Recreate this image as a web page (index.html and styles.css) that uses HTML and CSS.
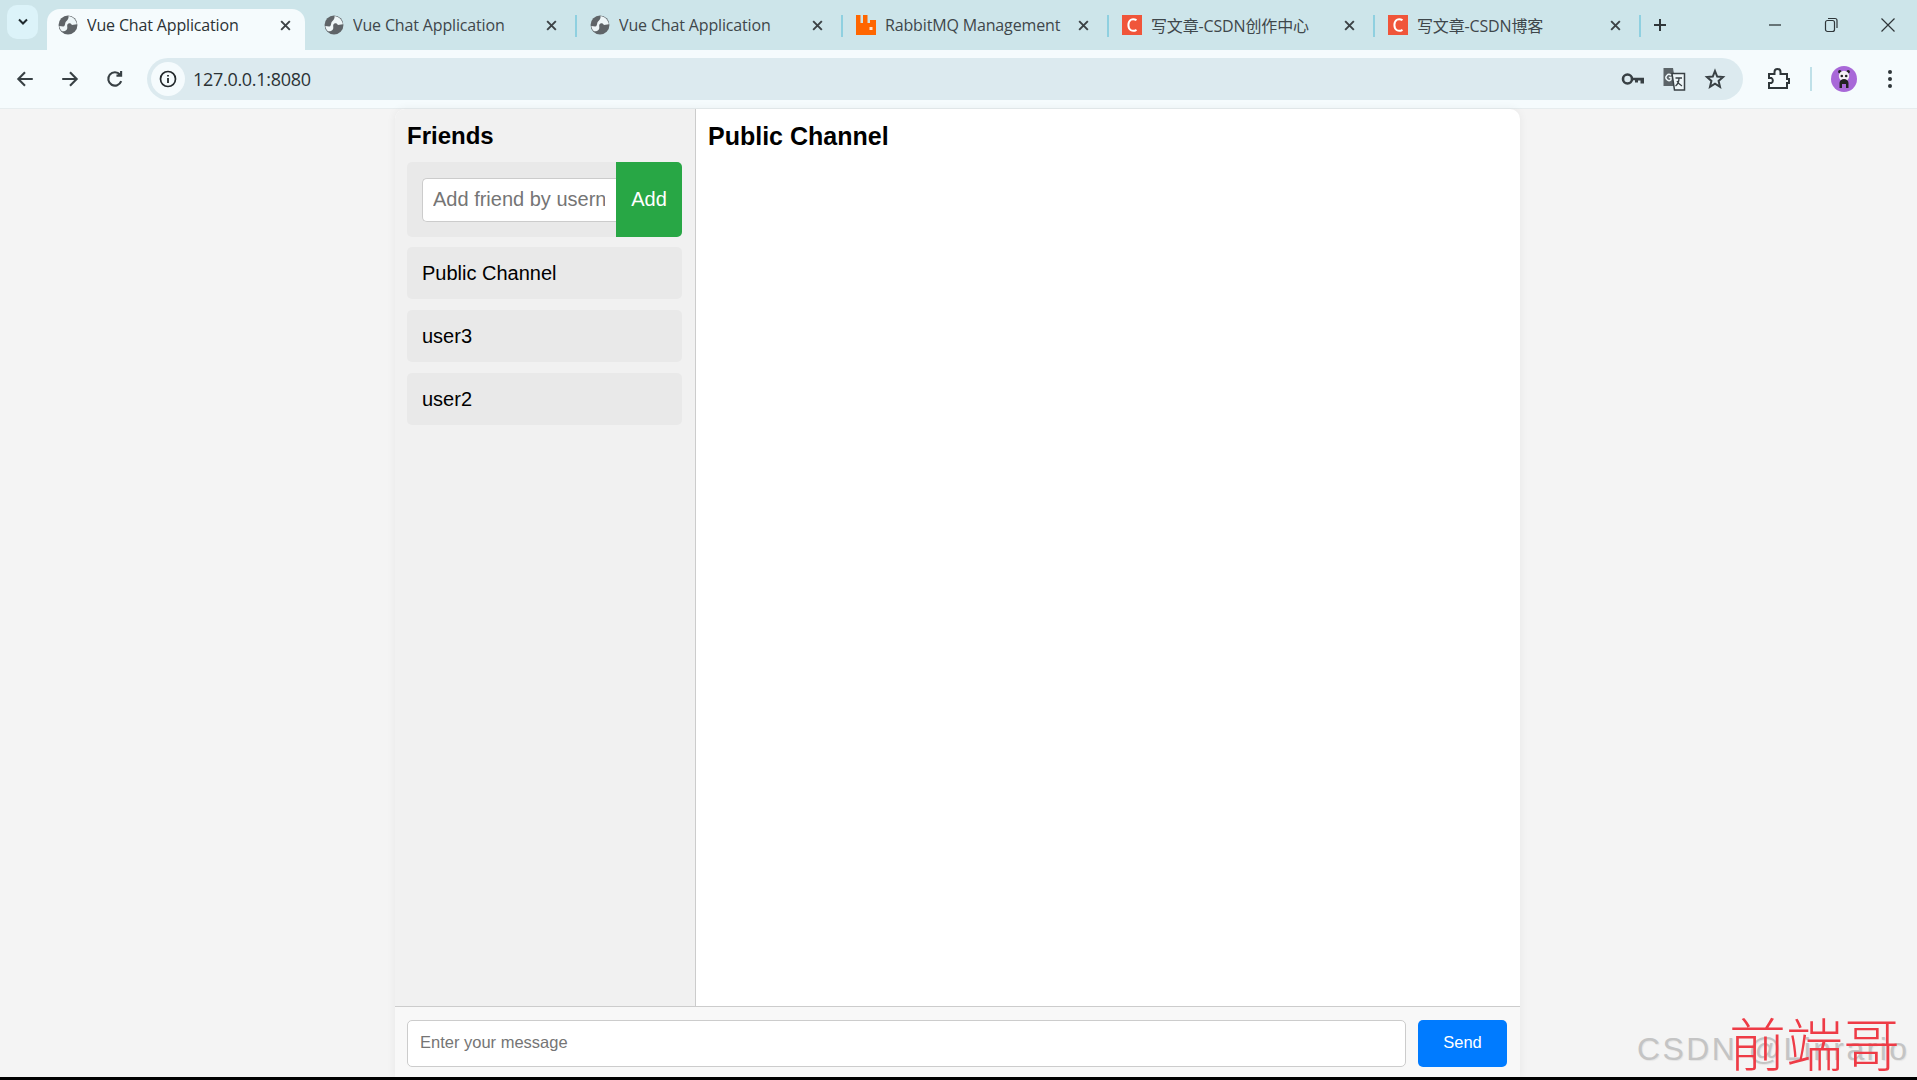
FILE: index.html
```html
<!DOCTYPE html>
<html lang="en">
<head>
    <meta charset="UTF-8">
    <meta name="viewport" content="width=device-width, initial-scale=1.0">
    <title>Vue Chat Application</title>
    <link rel="stylesheet" href="styles.css">
</head>
<body>
    <svg class="defs" width="0" height="0">
        <symbol id="globe" viewBox="-1 -1 18 18">
            <circle cx="8" cy="8" r="8.500" fill="#5f6468"/>
            <path d="M8.500 -0.200C12.500 0.400 15.500 3.500 16 7.400L11.500 8C10.800 6.400 8.600 5.900 7.600 7.400 6.800 8.700 7.800 10 7.200 11.600 6.500 13.200 4.600 13.800 2.600 13.600 1.400 12.400 0.400 10.500 0.200 8.800L3.600 9.400C5.200 9.300 5.300 7.600 5.600 6 6 4.200 8.800 3.600 8.500 -0.200Z" fill="#eef6f8"/>
        </symbol>
        <symbol id="close" viewBox="0 0 12 12">
            <path d="M2 2 10 10M10 2 2 10" stroke="#3c4245" stroke-width="1.800" fill="none"/>
        </symbol>
        <symbol id="csdn" viewBox="0 0 20 20">
            <rect width="20" height="20" fill="#f0553a"/>
            <path d="M14.500 5.200C10.500 2.800 6.400 4.800 6.400 10S10.500 17.200 14.500 14.800" stroke="#fff" stroke-width="2" fill="none"/>
        </symbol>
    </svg>

    <div class="tabstrip">
        <div class="tab-search">
            <svg width="12" height="8" viewBox="0 0 12 8"><path d="M2 1.500 6 5.500 10 1.500" stroke="#1f2a2e" stroke-width="2" fill="none"/></svg>
        </div>
        <div class="tab active">
            <svg class="favicon"><use href="#globe"/></svg>
            <span class="tab-title">Vue Chat Application</span>
            <svg class="tab-close"><use href="#close"/></svg>
        </div>
        <div class="tab">
            <svg class="favicon"><use href="#globe"/></svg>
            <span class="tab-title">Vue Chat Application</span>
            <svg class="tab-close"><use href="#close"/></svg>
        </div>
        <div class="tab sep">
            <svg class="favicon"><use href="#globe"/></svg>
            <span class="tab-title">Vue Chat Application</span>
            <svg class="tab-close"><use href="#close"/></svg>
        </div>
        <div class="tab sep">
            <svg class="favicon" viewBox="0 0 20 20">
                <path d="M0 0H4.500V8H7V0H11.500V8H14V5H20V20H0Z" fill="#ff6600"/>
                <rect x="13.500" y="12" width="3" height="3" fill="#ffe3cc"/>
            </svg>
            <span class="tab-title">RabbitMQ Management</span>
            <svg class="tab-close"><use href="#close"/></svg>
        </div>
        <div class="tab sep">
            <svg class="favicon"><use href="#csdn"/></svg>
            <span class="tab-title">写文章-CSDN创作中心</span>
            <svg class="tab-close"><use href="#close"/></svg>
        </div>
        <div class="tab sep last">
            <svg class="favicon"><use href="#csdn"/></svg>
            <span class="tab-title">写文章-CSDN博客</span>
            <svg class="tab-close"><use href="#close"/></svg>
        </div>
        <svg class="new-tab" width="14" height="14" viewBox="0 0 14 14"><path d="M7 1V13M1 7H13" stroke="#2f3639" stroke-width="2"/></svg>
        <div class="window-controls">
            <svg width="14" height="14" viewBox="0 0 14 14"><path d="M1 7H13" stroke="#2f3639" stroke-width="1.300"/></svg>
            <svg width="14" height="16" viewBox="0 0 14 16"><rect x="1.500" y="3.500" width="9" height="11" rx="2" stroke="#2f3639" stroke-width="1.200" fill="none"/><path d="M4 1.500H11A2 2 0 0 1 13 3.500V11" stroke="#2f3639" stroke-width="1.200" fill="none"/></svg>
            <svg width="16" height="16" viewBox="0 0 16 16"><path d="M1.500 1.500 14.500 14.500M14.500 1.500 1.500 14.500" stroke="#2f3639" stroke-width="1.200"/></svg>
        </div>
    </div>

    <div class="toolbar">
        <svg class="nav-icon" viewBox="0 0 18 18"><path d="M16 9H3M9 3 3 9 9 15" stroke="#384044" stroke-width="1.900" fill="none"/></svg>
        <svg class="nav-icon" viewBox="0 0 18 18"><path d="M2 9H15M9 3 15 9 9 15" stroke="#384044" stroke-width="1.900" fill="none"/></svg>
        <svg class="nav-icon" viewBox="0 0 18 18"><path d="M14.600 11A6 6 0 1 1 13.500 5M14.500 1.800V6H10.300" stroke="#384044" stroke-width="1.900" fill="none"/></svg>
        <div class="address">
            <span class="site-info">
                <svg width="18" height="18" viewBox="0 0 18 18"><circle cx="9" cy="9" r="7.500" stroke="#23292c" stroke-width="1.700" fill="none"/><path d="M9 8V13M9 5V6.600" stroke="#23292c" stroke-width="1.800"/></svg>
            </span>
            <span class="url">127.0.0.1:8080</span>
            <svg class="addr-icon" viewBox="0 0 24 24"><circle cx="6.500" cy="12" r="4.500" stroke="#384044" stroke-width="2.600" fill="none"/><path d="M11 10.700H23V16.500H19.500V13.500H17V15.500H14V13.300H11Z" fill="#384044"/></svg>
            <svg class="addr-icon" viewBox="0 0 24 24"><path d="M1.500 1H11L14 19H1.500Z" fill="#5c6468"/><path d="M10 6.500H22.500V23H12.500Z" fill="#eef6f8" stroke="#384044" stroke-width="1.500"/><path d="M9 8.300A3 3 0 1 0 9 12.700V10.500H6.800" stroke="#eef6f8" stroke-width="1.400" fill="none"/><path d="M13.500 11H20M17 11C17 15 15.500 17.500 13.500 19M15 14C16 16 18 18 20 19" stroke="#384044" stroke-width="1.300" fill="none"/></svg>
            <svg class="addr-icon" viewBox="0 0 24 24"><path d="M12 4 14.200 9.600 20 10.100 15.600 13.900 17 19.800 12 16.700 7 19.800 8.400 13.900 4 10.100 9.800 9.600Z" stroke="#384044" stroke-width="2" fill="none"/></svg>
        </div>
        <svg class="ext-icon" viewBox="0 0 24 24"><path d="M3 7H8.500V5A3 3 0 0 1 14.500 5V7H21V12H23V16H21V21H3V16H5.500A3 3 0 0 0 5.500 11H3Z" stroke="#2f3639" stroke-width="2" fill="none"/></svg>
        <span class="divider"></span>
        <svg class="avatar" viewBox="0 0 26 26">
            <circle cx="13" cy="13" r="13" fill="#a868d8"/>
            <circle cx="8.800" cy="5.800" r="1.700" fill="#222"/>
            <circle cx="17.200" cy="5.800" r="1.700" fill="#222"/>
            <circle cx="13" cy="10" r="5.200" fill="#f4f0f4"/>
            <circle cx="10.800" cy="10" r="1.300" fill="#222"/>
            <circle cx="15.200" cy="10" r="1.300" fill="#222"/>
            <path d="M8.500 22V17A4.500 4 0 0 1 17.500 17V22H15V18H11V22Z" fill="#222"/>
        </svg>
        <svg class="menu-icon" width="4" height="18" viewBox="0 0 4 18"><circle cx="2" cy="2" r="2" fill="#2f3639"/><circle cx="2" cy="9" r="2" fill="#2f3639"/><circle cx="2" cy="16" r="2" fill="#2f3639"/></svg>
    </div>

    <div class="page">
        <div class="chat-app">
            <div class="chat-main">
                <div class="sidebar">
                    <h2>Friends</h2>
                    <form class="add-friend">
                        <input type="text" placeholder="Add friend by username">
                        <button type="button">Add</button>
                    </form>
                    <ul class="friend-list">
                        <li>Public Channel</li>
                        <li>user3</li>
                        <li>user2</li>
                    </ul>
                </div>
                <div class="messages">
                    <h2>Public Channel</h2>
                </div>
            </div>
            <form class="composer">
                <input type="text" placeholder="Enter your message">
                <button type="button">Send</button>
            </form>
        </div>
        <div class="watermark">
            <span class="wm-csdn">CSDN @Linrario</span>
            <span class="wm-name">前端哥</span>
        </div>
    </div>
    <div class="taskbar-edge"></div>
</body>
</html>
```

FILE: styles.css
```css
* {
    box-sizing: border-box;
}
html, body {
    height: 100%;
}
body {
    margin: 0;
    display: flex;
    flex-direction: column;
    height: 1080px;
    overflow: hidden;
    background-color: #f4f4f4;
    font-family: "Liberation Sans", Arial, sans-serif;
    color: #000;
}
.defs {
    position: absolute;
}

/* browser chrome */
.tabstrip {
    display: flex;
    align-items: center;
    flex: 0 0 50px;
    height: 50px;
    padding-left: 7px;
    background-color: #cde5ea;
    font-family: "Open Sans", "Noto Sans CJK SC", sans-serif;
}
.tab-search {
    display: flex;
    align-items: center;
    justify-content: center;
    width: 31px;
    height: 34px;
    margin: 0 9px 6px 0;
    border-radius: 10px;
    background-color: #dcf3f9;
}
.tab {
    position: relative;
    display: flex;
    align-items: center;
    flex: 0 0 258px;
    height: 50px;
    margin-right: 8px;
    padding: 0 13px 0 11px;
    color: #3f474b;
    font-size: 16px;
}
.tab.active {
    height: 41px;
    margin-top: 9px;
    padding-bottom: 9px;
    border-radius: 13px 13px 0 0;
    background-color: #f5fbfd;
    color: #2b3235;
}
.tab.sep::before, .tab.last::after {
    content: "";
    position: absolute;
    top: 15px;
    width: 2px;
    height: 22px;
    background-color: #8fd0e0;
}
.tab.sep::before {
    left: -4px;
}
.tab.last::after {
    right: -6px;
}
.favicon {
    flex: 0 0 20px;
    width: 20px;
    height: 20px;
    margin-right: 9px;
}
.tab-title {
    flex: 1;
    white-space: nowrap;
    overflow: hidden;
    letter-spacing: -0.15px;
}
.tab-close {
    flex: 0 0 13px;
    width: 13px;
    height: 13px;
}
.new-tab {
    margin-left: 10px;
}
.window-controls {
    display: flex;
    align-items: center;
    gap: 42px;
    margin-left: auto;
    padding-right: 21px;
}
.toolbar {
    display: flex;
    align-items: center;
    flex: 0 0 59px;
    padding-left: 15px;
    background-color: #f5fbfd;
    border-bottom: 1px solid #e6ecee;
}
.nav-icon {
    width: 20px;
    height: 20px;
    margin-right: 25px;
}
.address {
    display: flex;
    align-items: center;
    flex: 0 0 1596px;
    height: 42px;
    margin-left: -3px;
    padding-right: 16px;
    border-radius: 21px;
    background-color: #dceaef;
}
.site-info {
    display: flex;
    align-items: center;
    justify-content: center;
    width: 34px;
    height: 34px;
    margin-left: 4px;
    border-radius: 50%;
    background-color: #f5fbfd;
}
.url {
    flex: 1;
    margin-left: 8px;
    color: #2b3235;
    font-family: "Open Sans", sans-serif;
    font-size: 18px;
    letter-spacing: -0.3px;
}
.addr-icon {
    width: 24px;
    height: 24px;
    margin-left: 17px;
}
.ext-icon {
    width: 24px;
    height: 24px;
    margin-left: 23px;
}
.divider {
    width: 2px;
    height: 24px;
    margin: 0 19px 0 20px;
    background-color: #bfe0e8;
}
.avatar {
    width: 26px;
    height: 26px;
}
.menu-icon {
    margin-left: 31px;
}

/* chat page */
.page {
    position: relative;
    flex: 1;
    min-height: 0;
}
.chat-app {
    display: flex;
    flex-direction: column;
    width: 1125px;
    height: 100%;
    margin-left: 395px;
    border-radius: 10px 10px 0 0;
    background-color: #fff;
    box-shadow: 0 0 10px rgba(0, 0, 0, 0.06);
    overflow: hidden;
}
.chat-main {
    display: flex;
    flex: 1;
    min-height: 0;
}
.sidebar {
    flex: 0 0 301px;
    padding: 12px 13px 12px 12px;
    background-color: #f1f1f1;
    border-right: 1px solid #ccc;
}
h2 {
    margin: 0;
    font-size: 24px;
    line-height: 30px;
}
.messages {
    flex: 1;
    padding: 12px;
}
.messages h2 {
    font-size: 25px;
}
.add-friend {
    display: flex;
    align-items: center;
    height: 75px;
    margin-top: 11px;
    padding-left: 15px;
    border-radius: 5px;
    background-color: #e9e9e9;
}
.add-friend input {
    flex: 0 0 194px;
    width: 194px;
    height: 44px;
    padding: 0 11px 0 10px;
    border: 1px solid #ccc;
    border-right: 0;
    border-radius: 5px 0 0 5px;
    font-family: inherit;
    font-size: 20px;
}
.add-friend button {
    flex: 1;
    align-self: stretch;
    border: 0;
    border-radius: 0 5px 5px 0;
    background-color: #28a745;
    color: #fff;
    font-family: inherit;
    font-size: 20px;
}
input::placeholder {
    color: #757575;
}
.friend-list {
    margin: 10px 0 0;
    padding: 0;
    list-style: none;
}
.friend-list li {
    height: 52px;
    margin-bottom: 11px;
    padding: 0 15px;
    border-radius: 5px;
    background-color: #e9e9e9;
    font-size: 20px;
    line-height: 52px;
}
.composer {
    display: flex;
    gap: 12px;
    flex: 0 0 71px;
    padding: 13px 13px 10px 12px;
    background-color: #f8f8f8;
    border-top: 1px solid #ccc;
}
.composer input {
    flex: 1;
    min-width: 0;
    padding: 0 12px 2px;
    border: 1px solid #ccc;
    border-radius: 5px;
    font-family: inherit;
    font-size: 16.500px;
}
.composer button {
    flex: 0 0 89px;
    padding: 0 0 2px;
    border: 0;
    border-radius: 5px;
    background-color: #007bff;
    color: #fff;
    font-family: inherit;
    font-size: 16.500px;
}

/* pasted-on watermark, sits over the page */
.watermark {
    position: absolute;
    right: 0;
    bottom: 0;
    width: 290px;
    height: 70px;
}
.wm-csdn {
    position: absolute;
    left: 10px;
    bottom: 9px;
    color: #c4c4c4;
    font-size: 32px;
    letter-spacing: 2.400px;
    text-shadow: 1px 1px 1px #e4e4e4;
    white-space: nowrap;
}
.wm-name {
    position: absolute;
    left: 102px;
    bottom: 7px;
    color: #ee3b46;
    font-family: "Noto Sans CJK SC", sans-serif;
    font-size: 57px;
    font-weight: 300;
    line-height: 1;
    white-space: nowrap;
}
.taskbar-edge {
    flex: 0 0 3px;
    background-color: #000;
}
```
